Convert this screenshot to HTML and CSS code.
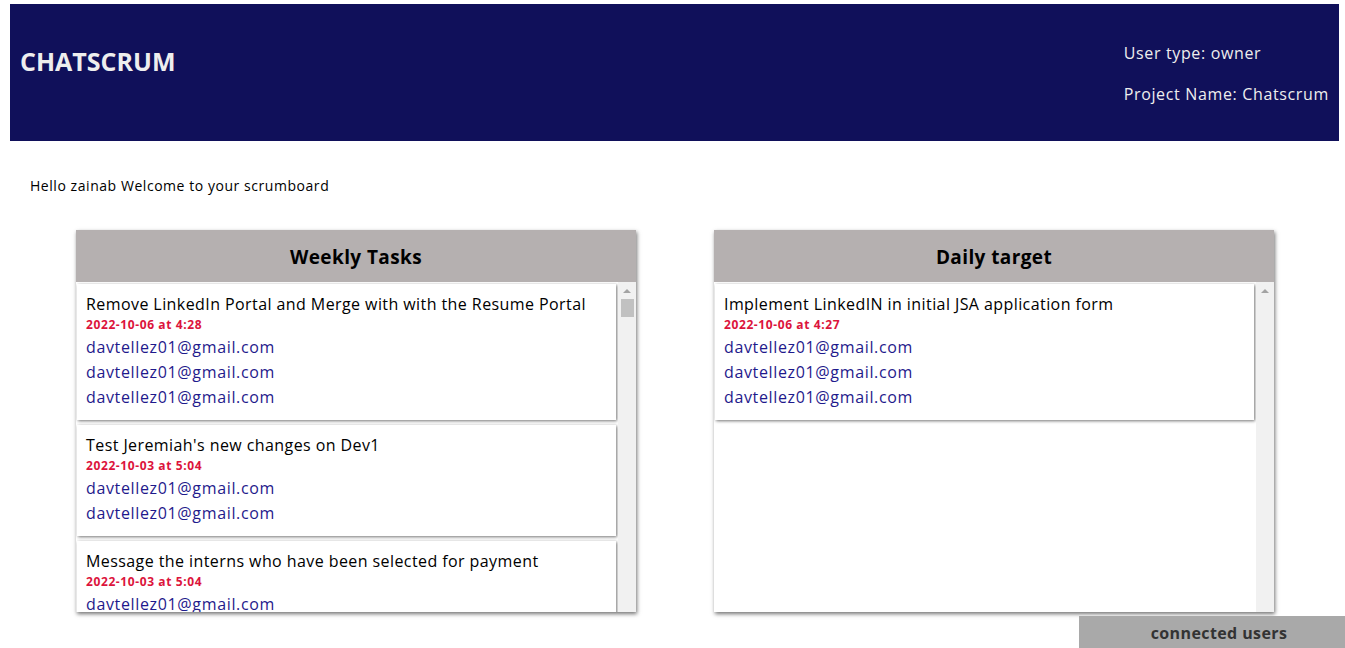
FILE: index.html
```html
<!DOCTYPE html>
<html>
<head>
<meta charset="utf-8">
<link rel="stylesheet" href="styles.css">
</head>
<body>
<header class="topbar">
  <h1 class="brand">CHATSCRUM</h1>
  <div class="meta">
    <p>User type: owner</p>
    <p>Project Name: Chatscrum</p>
  </div>
</header>
<p class="hello">Hello zainab Welcome to your scrumboard</p>
<main class="board">
  <section class="panel">
    <h2 class="panel-title">Weekly Tasks</h2>
    <div class="list">
      <div class="cards">
        <div class="card">
          <div class="task">Remove LinkedIn Portal and Merge with with the Resume Portal</div>
          <div class="date">2022-10-06 at 4:28</div>
          <div class="email">davtellez01@gmail.com</div>
          <div class="email">davtellez01@gmail.com</div>
          <div class="email">davtellez01@gmail.com</div>
        </div>
        <div class="card">
          <div class="task">Test Jeremiah's new changes on Dev1</div>
          <div class="date">2022-10-03 at 5:04</div>
          <div class="email">davtellez01@gmail.com</div>
          <div class="email">davtellez01@gmail.com</div>
        </div>
        <div class="card">
          <div class="task">Message the interns who have been selected for payment</div>
          <div class="date">2022-10-03 at 5:04</div>
          <div class="email">davtellez01@gmail.com</div>
        </div>
      </div>
      <div class="scrollbar">
        <span class="arrow"></span>
        <span class="thumb"></span>
      </div>
    </div>
  </section>
  <section class="panel">
    <h2 class="panel-title">Daily target</h2>
    <div class="list">
      <div class="cards">
        <div class="card">
          <div class="task">Implement LinkedIN in initial JSA application form</div>
          <div class="date">2022-10-06 at 4:27</div>
          <div class="email">davtellez01@gmail.com</div>
          <div class="email">davtellez01@gmail.com</div>
          <div class="email">davtellez01@gmail.com</div>
        </div>
      </div>
      <div class="scrollbar">
        <span class="arrow"></span>
      </div>
    </div>
  </section>
</main>
<div class="connected">connected users</div>
</body>
</html>
```
FILE: styles.css
```css
* { box-sizing: border-box; }
html, body { margin: 0; padding: 0; }
body {
  font-family: "Open Sans", "Noto Sans", sans-serif;
  color: #000;
  background: #fff;
  overflow: hidden;
  height: 648px;
}
.topbar {
  margin: 4px 6px 0 10px;
  height: 137px;
  background: #10105a;
  display: flex;
  justify-content: space-between;
  align-items: flex-start;
  padding: 0 10px;
}
.brand {
  margin: 39px 0 0 0;
  font-size: 25px;
  line-height: 36px;
  font-weight: 700;
  color: #eeeeee;
}
.meta {
  padding-top: 37px;
  color: #eeeeee;
  font-size: 16px;
  letter-spacing: 0.65px;
}
.meta p {
  margin: 0 0 17px 0;
  line-height: 24px;
}
.hello {
  margin: 34px 0 0 30px;
  font-size: 14px;
  line-height: 22px;
  letter-spacing: 0.55px;
}
.board {
  margin: 33px 0 0 0;
  padding-left: 76px;
  display: flex;
  gap: 78px;
}
.panel {
  width: 560px;
  height: 382px;
  display: flex;
  flex-direction: column;
  background: #fff;
  box-shadow: 1px 2px 4px rgba(0,0,0,0.55);
}
.panel-title {
  margin: 0;
  height: 52px;
  flex: none;
  background: #b5b0b0;
  font-size: 19px;
  font-weight: 700;
  line-height: 54px;
  letter-spacing: 0.4px;
  text-align: center;
}
.list {
  flex: 1;
  min-height: 0;
  display: flex;
}
.cards {
  flex: 1;
  min-width: 0;
  overflow: hidden;
  padding: 2px 2px 0 1px;
}
.scrollbar {
  flex: none;
  width: 18px;
  background: #f1f1f1;
  display: flex;
  flex-direction: column;
  align-items: flex-start;
}
.arrow {
  margin: 7px 0 0 5px;
  width: 0;
  height: 0;
  border-left: 4px solid transparent;
  border-right: 4px solid transparent;
  border-bottom: 4px solid #a3a3a3;
}
.thumb {
  margin: 6px 0 0 3px;
  width: 13px;
  height: 18px;
  background: #c1c1c1;
}
.card {
  margin: 0 0 5px 0;
  padding: 10px 9px 10px 9px;
  background: #fff;
  box-shadow: 1px 1px 3px rgba(0,0,0,0.55);
}
.task {
  font-size: 16px;
  line-height: 20px;
  letter-spacing: 0.42px;
}
.date {
  margin: 3px 0 2px 0;
  font-size: 12px;
  line-height: 16px;
  font-weight: 700;
  letter-spacing: 0.6px;
  color: #dc143c;
}
.email {
  font-size: 16px;
  line-height: 25px;
  letter-spacing: 0.65px;
  color: #1f1a8c;
}
.connected {
  position: fixed;
  right: 0;
  bottom: 0;
  width: 266px;
  height: 32px;
  padding-left: 14px;
  background: #a9a9a9;
  color: #333;
  font-size: 16px;
  font-weight: 700;
  line-height: 34px;
  letter-spacing: 0.4px;
  text-align: center;
}
```
